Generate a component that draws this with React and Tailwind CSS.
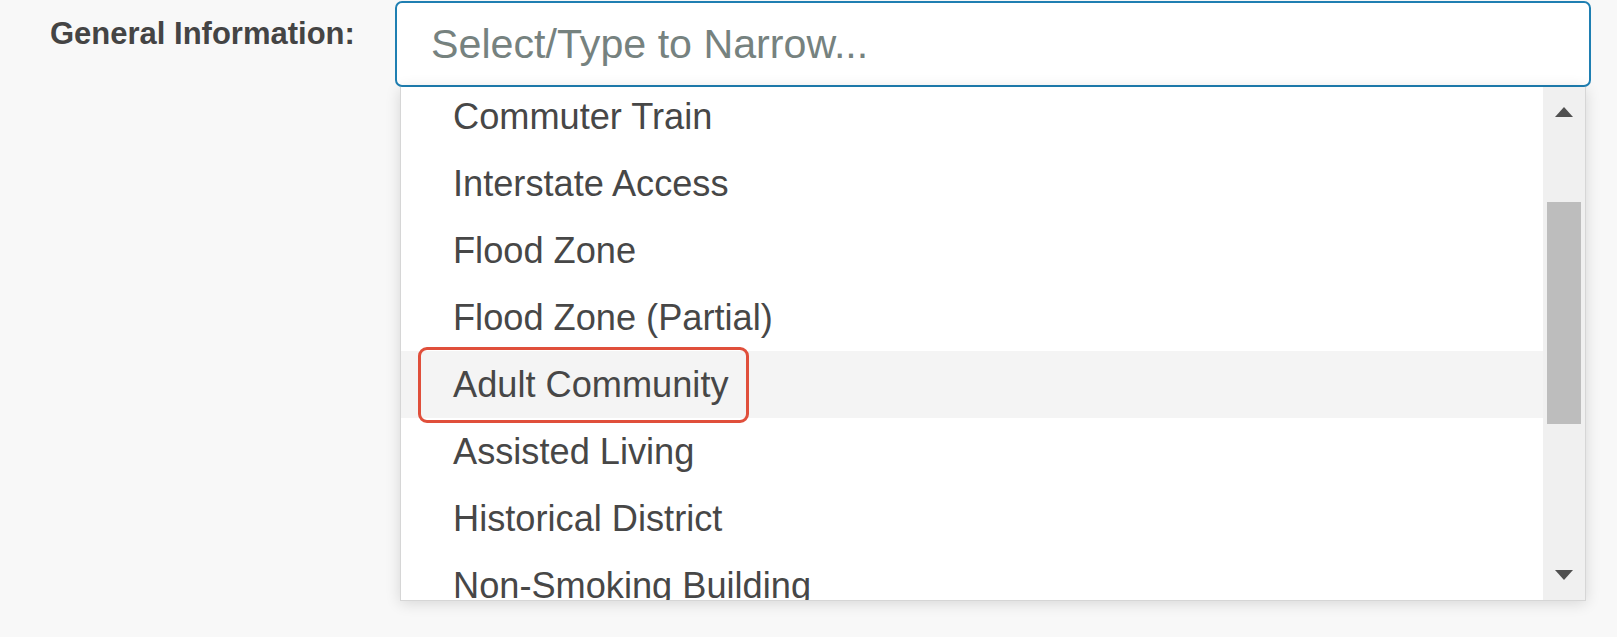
const options = [
  'Commuter Train',
  'Interstate Access',
  'Flood Zone',
  'Flood Zone (Partial)',
  'Adult Community',
  'Assisted Living',
  'Historical District',
  'Non-Smoking Building',
];

const HOVERED = 'Adult Community';

function ScrollArrow({ down }) {
  return (
    <svg width="20" height="12" viewBox="0 0 20 12" className="text-[#505050]">
      {down ? <path d="M1 1h18L10 11z" fill="currentColor" /> : <path d="M10 1L19 11H1z" fill="currentColor" />}
    </svg>
  );
}

export default function App() {
  return (
    <div className="min-h-screen w-full bg-[#f8f8f8] font-[Liberation_Sans,Arial,sans-serif]">
      <div className="flex pt-[1px] pr-[26px]">
        {/* Label */}
        <div className="w-[395px] shrink-0 pl-[50px] pt-[17px]">
          <span className="block text-[31px] font-bold leading-none text-[#444]">General Information:</span>
        </div>

        {/* Field + dropdown */}
        <div className="flex flex-1 flex-col">
          <div className="flex h-[86px] items-center rounded-[7px] border-2 border-[#1f7fb2] bg-white pl-[34px] pt-[2px]">
            <span className="text-[41.2px] leading-none text-[#76827f]">Select/Type to Narrow...</span>
          </div>

          <div className="mx-[5px] flex h-[514px] border border-t-0 border-[#d6d6d6] bg-white shadow-[0_2px_14px_rgba(0,0,0,0.14)]">
            {/* Options */}
            <div className="flex-1 overflow-hidden">
              <ul className="-mt-[4px]">
                {options.map((opt) => (
                  <li
                    key={opt}
                    className={`relative flex h-[67px] items-center pl-[52px] pt-[2px] text-[36.2px] text-[#474747] ${opt === HOVERED ? 'bg-[#f4f4f4]' : ''}`}
                  >
                    {opt}
                    {opt === HOVERED && (
                      <span className="pointer-events-none absolute left-[17px] top-[-4px] h-[76px] w-[331px] rounded-[9px] border-[3px] border-[#e04f3b]" />
                    )}
                  </li>
                ))}
              </ul>
            </div>

            {/* Scrollbar */}
            <div className="flex w-[42px] shrink-0 flex-col bg-[#f0f0f0]">
              <div className="flex h-[50px] items-center justify-center">
                <ScrollArrow />
              </div>
              <div className="flex-1 px-[4px] pt-[65px]">
                <div className="h-[222px] w-full bg-[#bdbdbd]" />
              </div>
              <div className="flex h-[50px] items-center justify-center">
                <ScrollArrow down />
              </div>
            </div>
          </div>
        </div>
      </div>
    </div>
  );
}
